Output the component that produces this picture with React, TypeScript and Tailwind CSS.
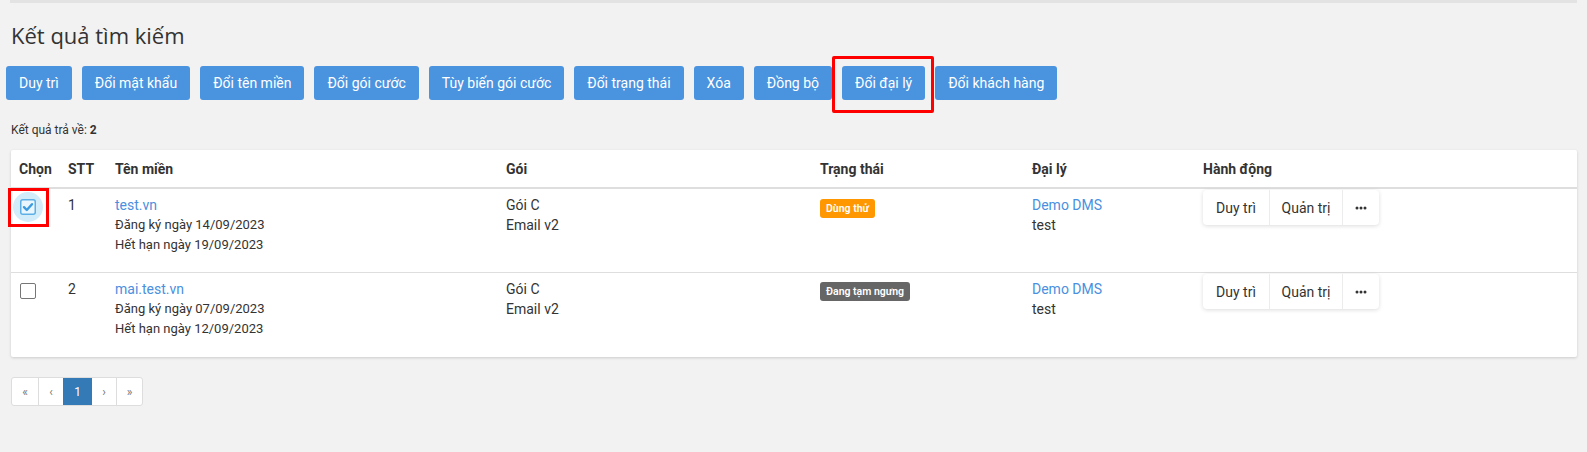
import { useState } from "react";

type Row = {
  stt: number;
  domain: string;
  registered: string;
  expires: string;
  plan: string;
  product: string;
  status: "trial" | "paused";
  agency: string;
  agencyUser: string;
};

const rows: Row[] = [
  {
    stt: 1,
    domain: "test.vn",
    registered: "14/09/2023",
    expires: "19/09/2023",
    plan: "Gói C",
    product: "Email v2",
    status: "trial",
    agency: "Demo DMS",
    agencyUser: "test",
  },
  {
    stt: 2,
    domain: "mai.test.vn",
    registered: "07/09/2023",
    expires: "12/09/2023",
    plan: "Gói C",
    product: "Email v2",
    status: "paused",
    agency: "Demo DMS",
    agencyUser: "test",
  },
];

const bulkActions = [
  "Duy trì",
  "Đổi mật khẩu",
  "Đổi tên miền",
  "Đổi gói cước",
  "Tùy biến gói cước",
  "Đổi trạng thái",
  "Xóa",
  "Đồng bộ",
  "Đổi đại lý",
  "Đổi khách hàng",
];

const cols = "grid grid-cols-[49px_47px_391px_314px_212px_171px_1fr]";

const CheckBox = ({ checked, onClick }: { checked: boolean; onClick: () => void }) => {
  if (checked) {
    return (
      <button onClick={onClick} className="relative mt-[4px] ml-px block h-4 w-4">
        <span className="absolute -left-[7px] -top-[7px] h-[30px] w-[30px] rounded-full bg-[#d3ecf9]" />
        <svg viewBox="0 0 16 16" className="relative h-4 w-4">
          <rect x="0.75" y="0.75" width="14.5" height="14.5" rx="2" fill="#eaf6fd" stroke="#5cb0e6" strokeWidth="1.5" />
          <path d="M4 8.2 L6.8 11 L12 5.2" fill="none" stroke="#3a9be0" strokeWidth="2.4" strokeLinecap="round" strokeLinejoin="round" />
        </svg>
      </button>
    );
  }
  return (
    <button
      onClick={onClick}
      className="mt-[4px] ml-px block h-4 w-4 rounded-[2px] border border-[#767676] bg-white"
    />
  );
};

const Dots = () => (
  <svg viewBox="0 0 12 4" className="h-[4px] w-[12px]">
    <circle cx="2" cy="2" r="1.5" fill="#333" />
    <circle cx="6" cy="2" r="1.5" fill="#333" />
    <circle cx="10" cy="2" r="1.5" fill="#333" />
  </svg>
);

export default function App() {
  const [selected, setSelected] = useState<number[]>([1]);

  const toggle = (id: number) =>
    setSelected((s) => (s.includes(id) ? s.filter((x) => x !== id) : [...s, id]));

  return (
    <div className="min-h-[452px] bg-[#f2f2f2] px-[10px] font-['Roboto',sans-serif] text-[#333]">
      <div className="h-[3px] bg-[#e3e3e3]" />

      <h1 className="mt-[17px] pl-px font-['Open_Sans',sans-serif] text-[22px] leading-[30px] text-[#333]">
        Kết quả tìm kiếm
      </h1>

      <div className="-ml-1 mt-[16px] flex gap-[10px]">
        {bulkActions.map((label) => (
          <div key={label} className="relative">
            <button className="h-[34px] rounded-[3px] bg-[#4a93de] px-[13px] text-[14px] leading-5 text-white">
              {label}
            </button>
            {label === "Đổi đại lý" && (
              <span className="pointer-events-none absolute -bottom-[13px] -left-[10px] -right-[9px] -top-[10px] rounded-[2px] border-[3px] border-[#ff0000]" />
            )}
          </div>
        ))}
      </div>

      <p className="mt-[22px] pl-px text-[12px] leading-[17px]">
        Kết quả trả về: <b>2</b>
      </p>

      <div className="ml-px mt-[11px] rounded-[2px] bg-white shadow-[0_1px_3px_rgba(0,0,0,0.16)]">
        <div className={`${cols} border-b-2 border-[#dedede] text-[14px] font-bold leading-5`}>
          {["Chọn", "STT", "Tên miền", "Gói", "Trạng thái", "Đại lý", "Hành động"].map((h) => (
            <div key={h} className="px-2 pb-2 pt-[9px]">
              {h}
            </div>
          ))}
        </div>

        {rows.map((r, i) => (
          <div
            key={r.stt}
            className={`${cols} h-[84px] text-[14px] leading-5 ${i === 0 ? "border-b border-[#dedede]" : ""}`}
          >
            <div className="relative px-2 pt-[6px]">
              <CheckBox checked={selected.includes(r.stt)} onClick={() => toggle(r.stt)} />
              {i === 0 && (
                <span className="pointer-events-none absolute -left-[3px] -top-px h-[39px] w-[41px] border-[3px] border-[#ff0000]" />
              )}
            </div>
            <div className="px-2 pt-[6px]">{r.stt}</div>
            <div className="px-2 pt-[6px]">
              <a className="block text-[#4a8fe0]">{r.domain}</a>
              <div className="text-[13px] leading-[19.5px]">Đăng ký ngày {r.registered}</div>
              <div className="text-[13px] leading-[19.5px]">Hết hạn ngày {r.expires}</div>
            </div>
            <div className="px-2 pt-[6px]">
              <div>{r.plan}</div>
              <div>{r.product}</div>
            </div>
            <div className="px-2 pt-[6px]">
              {r.status === "trial" ? (
                <span className="mt-[4px] inline-block h-[19px] rounded-[3px] bg-[#ff9800] px-[6px] text-[10.5px] font-semibold leading-[19px] text-white">
                  Dùng thử
                </span>
              ) : (
                <span className="mt-[3px] inline-block h-[19px] rounded-[3px] bg-[#666] px-[6px] text-[10.5px] font-semibold leading-[19px] text-white">
                  Đang tạm ngưng
                </span>
              )}
            </div>
            <div className="px-2 pt-[6px]">
              <a className="block text-[#4a8fe0]">{r.agency}</a>
              <div>{r.agencyUser}</div>
            </div>
            <div className="px-2 pt-[6px]">
              <div className="-mt-[5px] flex h-[35px] w-fit rounded-[4px] bg-white shadow-[0_1px_4px_rgba(0,0,0,0.14)]">
                <button className="w-[66px] text-[14px]">Duy trì</button>
                <button className="w-[73px] border-l border-[#ececec] text-[14px]">Quản trị</button>
                <button className="flex w-[37px] items-center justify-center border-l border-[#ececec]">
                  <Dots />
                </button>
              </div>
            </div>
          </div>
        ))}
      </div>

      <div className="mt-5 pl-px">
        <div className="flex h-[29px] w-fit overflow-hidden rounded-[3px] border border-[#ddd] bg-white text-[12px] text-[#777]">
          <span className="flex w-[26px] items-center justify-center">«</span>
          <span className="flex w-[25px] items-center justify-center border-l border-[#ddd]">‹</span>
          <span className="flex w-[29px] items-center justify-center bg-[#337ab7] text-white">1</span>
          <span className="flex w-[24px] items-center justify-center">›</span>
          <span className="flex w-[26px] items-center justify-center border-l border-[#ddd]">»</span>
        </div>
      </div>
    </div>
  );
}
